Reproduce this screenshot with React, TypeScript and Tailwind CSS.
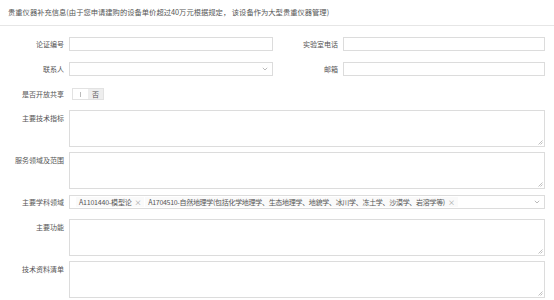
import React from "react";

const font = { fontFamily: '"Noto Sans CJK SC", "Noto Sans", sans-serif' };

function Label({ children, w = "w-[64px]", top = false }: { children: React.ReactNode; w?: string; top?: boolean }) {
  return (
    <div className={`${w} shrink-0 text-right text-[7px] leading-[14px] text-[#555] ${top ? "pt-[1px]" : ""}`}>
      {children}
    </div>
  );
}

function Input({ w }: { w: string }) {
  return <div className={`${w} h-[14px] border border-[#dcdcdc] bg-white ml-[5px]`} />;
}

function Area({ h = "h-[37px]" }: { h?: string }) {
  return (
    <div className={`relative w-[476px] ${h} border border-[#dcdcdc] bg-white ml-[5px]`}>
      <svg className="absolute right-[1px] bottom-[1px]" width="5" height="5" viewBox="0 0 5 5">
        <path d="M4.5 0.5 L0.5 4.5 M4.5 2.5 L2.5 4.5" stroke="#b0b0b0" strokeWidth="0.8" />
      </svg>
    </div>
  );
}

function Chevron() {
  return (
    <svg width="6" height="4" viewBox="0 0 6 4">
      <path d="M0.8 0.8 L3 3 L5.2 0.8" fill="none" stroke="#aaa" strokeWidth="0.8" />
    </svg>
  );
}

export default function App() {
  return (
    <div className="w-[554px] h-[300px] bg-white overflow-hidden" style={font}>
      <div className="h-[26px] border-b border-[#e6e6e6] flex items-center pl-[8px] text-[7.3px] text-[#555]">
        贵重仪器补充信息(由于您申请建购的设备单价超过40万元根据规定，&nbsp;该设备作为大型贵重仪器管理)
      </div>

      <div className="flex mt-[11px]">
        <Label>论证编号</Label>
        <Input w="w-[204px]" />
        <Label w="w-[65px]">实验室电话</Label>
        <Input w="w-[202px]" />
      </div>

      <div className="flex mt-[11px]">
        <Label>联系人</Label>
        <div className="w-[204px] h-[14px] border border-[#dcdcdc] bg-white ml-[5px] flex items-center justify-end pr-[4px]">
          <Chevron />
        </div>
        <Label w="w-[65px]">邮箱</Label>
        <Input w="w-[202px]" />
      </div>

      <div className="flex mt-[11px] items-center">
        <Label>是否开放共享</Label>
        <div className="ml-[8px] flex h-[12px] border border-[#e2e2e2] text-[7px] text-[#555]">
          <div className="w-[15px] flex items-center justify-center bg-white">
            <div className="w-[1px] h-[5px] bg-[#bbb]" />
          </div>
          <div className="w-[15px] flex items-center justify-center bg-[#eeeeee]">否</div>
        </div>
      </div>

      <div className="flex mt-[9px]">
        <Label top>主要技术指标</Label>
        <Area />
      </div>

      <div className="flex mt-[5px]">
        <Label top>服务领域及范围</Label>
        <Area />
      </div>

      <div className="flex mt-[6px]">
        <Label>主要学科领域</Label>
        <div className="w-[476px] h-[14px] border border-[#dcdcdc] bg-white ml-[5px] flex items-center pl-[6px] pr-[4px] text-[7px] text-[#555]">
          <div className="flex items-center gap-[3px] px-[3px] h-[10px] bg-[#fafafa] whitespace-nowrap tracking-[-0.2px]">
            <span>A1101440-模型论</span>
            <span className="text-[#999]">×</span>
          </div>
          <div className="ml-[1px] flex items-center gap-[3px] px-[3px] h-[10px] bg-[#fafafa] whitespace-nowrap tracking-[-0.3px]">
            <span>A1704510-自然地理学(包括化学地理学、生态地理学、地貌学、冰川学、冻土学、沙漠学、岩溶学等)</span>
            <span className="text-[#999]">×</span>
          </div>
          <div className="flex-1" />
          <Chevron />
        </div>
      </div>

      <div className="flex mt-[10px]">
        <Label top>主要功能</Label>
        <Area />
      </div>

      <div className="flex mt-[5px]">
        <Label top>技术资料清单</Label>
        <Area />
      </div>
    </div>
  );
}
